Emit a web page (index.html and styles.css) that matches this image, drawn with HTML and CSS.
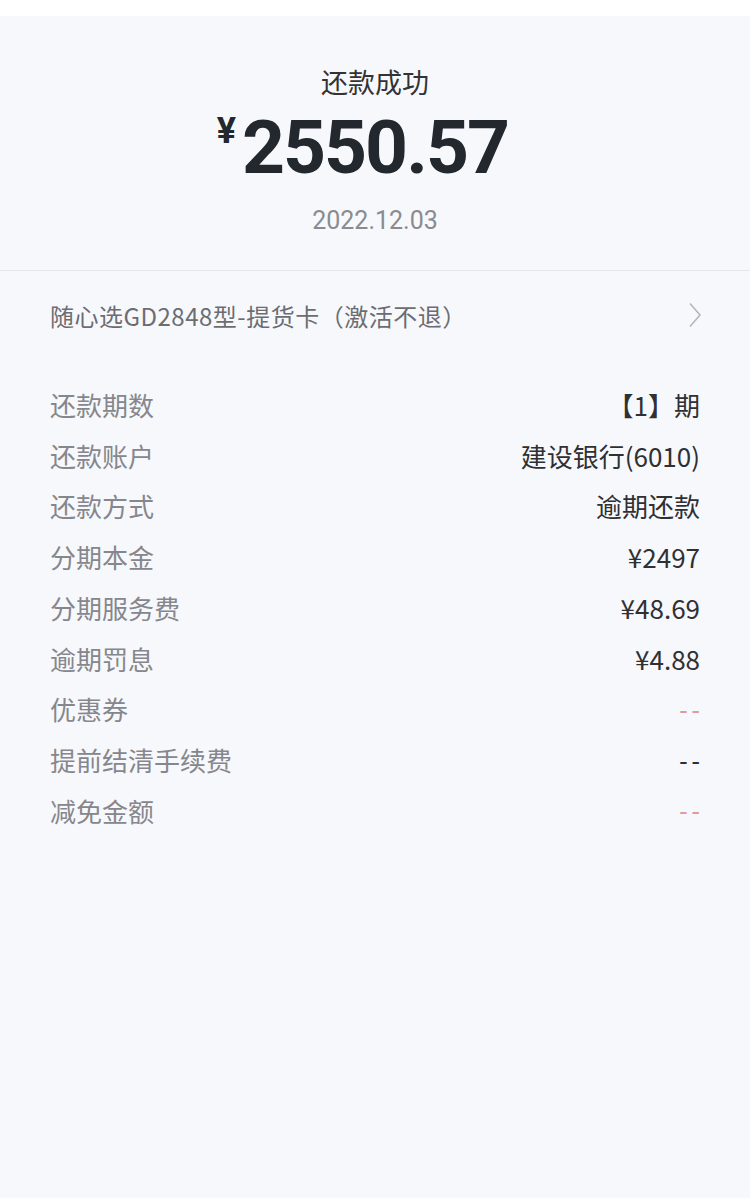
FILE: index.html
```html
<!DOCTYPE html>
<html lang="zh-CN">
<head>
  <meta charset="UTF-8" />
  <meta name="viewport" content="width=device-width, initial-scale=1" />
  <title>还款详情</title>
  <link rel="stylesheet" href="styles.css">
</head>
<body>

<div class="topbar"></div>

<section class="resumen">
  <div class="estado">还款成功</div>
  <div class="monto"><span class="yen">¥</span>2550.57</div>
  <div class="fecha">2022.12.03</div>
</section>

<a class="producto" href="#">
  <span>随心选GD2848型-提货卡（激活不退）</span>
  <svg class="flecha" width="14" height="26" viewBox="0 0 14 26"><path d="M2 1.5 L12 13 L2 24.5" fill="none" stroke="#b4b6bc" stroke-width="1.6" /></svg>
</a>

<ul class="detalles">
  <li><span class="etiqueta">还款期数</span><span class="valor">【1】期</span></li>
  <li><span class="etiqueta">还款账户</span><span class="valor">建设银行(6010)</span></li>
  <li><span class="etiqueta">还款方式</span><span class="valor">逾期还款</span></li>
  <li><span class="etiqueta">分期本金</span><span class="valor">¥2497</span></li>
  <li><span class="etiqueta">分期服务费</span><span class="valor">¥48.69</span></li>
  <li><span class="etiqueta">逾期罚息</span><span class="valor">¥4.88</span></li>
  <li><span class="etiqueta">优惠券</span><span class="valor vacio rojo">--</span></li>
  <li><span class="etiqueta">提前结清手续费</span><span class="valor vacio">--</span></li>
  <li><span class="etiqueta">减免金额</span><span class="valor vacio rojo">--</span></li>
</ul>

</body>
</html>
```

FILE: styles.css
```css
body {
  margin: 0; background: #f7f8fc; color: #222;
  font-family: "Noto Sans CJK SC", "Noto Sans", sans-serif;
  width: 750px; height: 1198px; overflow: hidden;
}
.topbar { height: 16px; background: #ffffff; }
.resumen {
  display: flex; flex-direction: column; align-items: center;
  padding-top: 47px; height: 255px; box-sizing: border-box;
  border-bottom: 1px solid #e6e7eb;
}
.estado { font-size: 27px; color: #333; line-height: 38px; }
.monto {
  position: relative;
  font-family: Roboto, "Liberation Sans", sans-serif; font-weight: 700;
  font-size: 75px; line-height: 80px; color: #23272e; margin-top: 6px;
  letter-spacing: -2px;
}
.yen {
  position: absolute; right: 100%; top: 0; margin-right: 6px;
  font-size: 36px; line-height: 48px; letter-spacing: 0;
}
.fecha {
  font-family: Roboto, "Liberation Sans", sans-serif;
  font-size: 25px; color: #8a8b90; margin-top: 19px; line-height: 30px;
}
.producto {
  display: flex; justify-content: space-between; align-items: center;
  padding: 0 48px 0 50px; height: 88px; text-decoration: none;
  font-size: 24px; color: #6c6d72; letter-spacing: 0.5px;
}
.detalles { list-style: none; margin: 0; padding: 20px 50px 0; }
.detalles li {
  display: flex; justify-content: space-between; align-items: center;
  height: 50.75px; font-size: 26px;
}
.etiqueta { color: #86878c; }
.valor { color: #2f3033; }
.vacio { letter-spacing: 4px; margin-right: -4px; font-family: "Noto Sans", sans-serif; }
.rojo { color: #e39a9a; }
```
